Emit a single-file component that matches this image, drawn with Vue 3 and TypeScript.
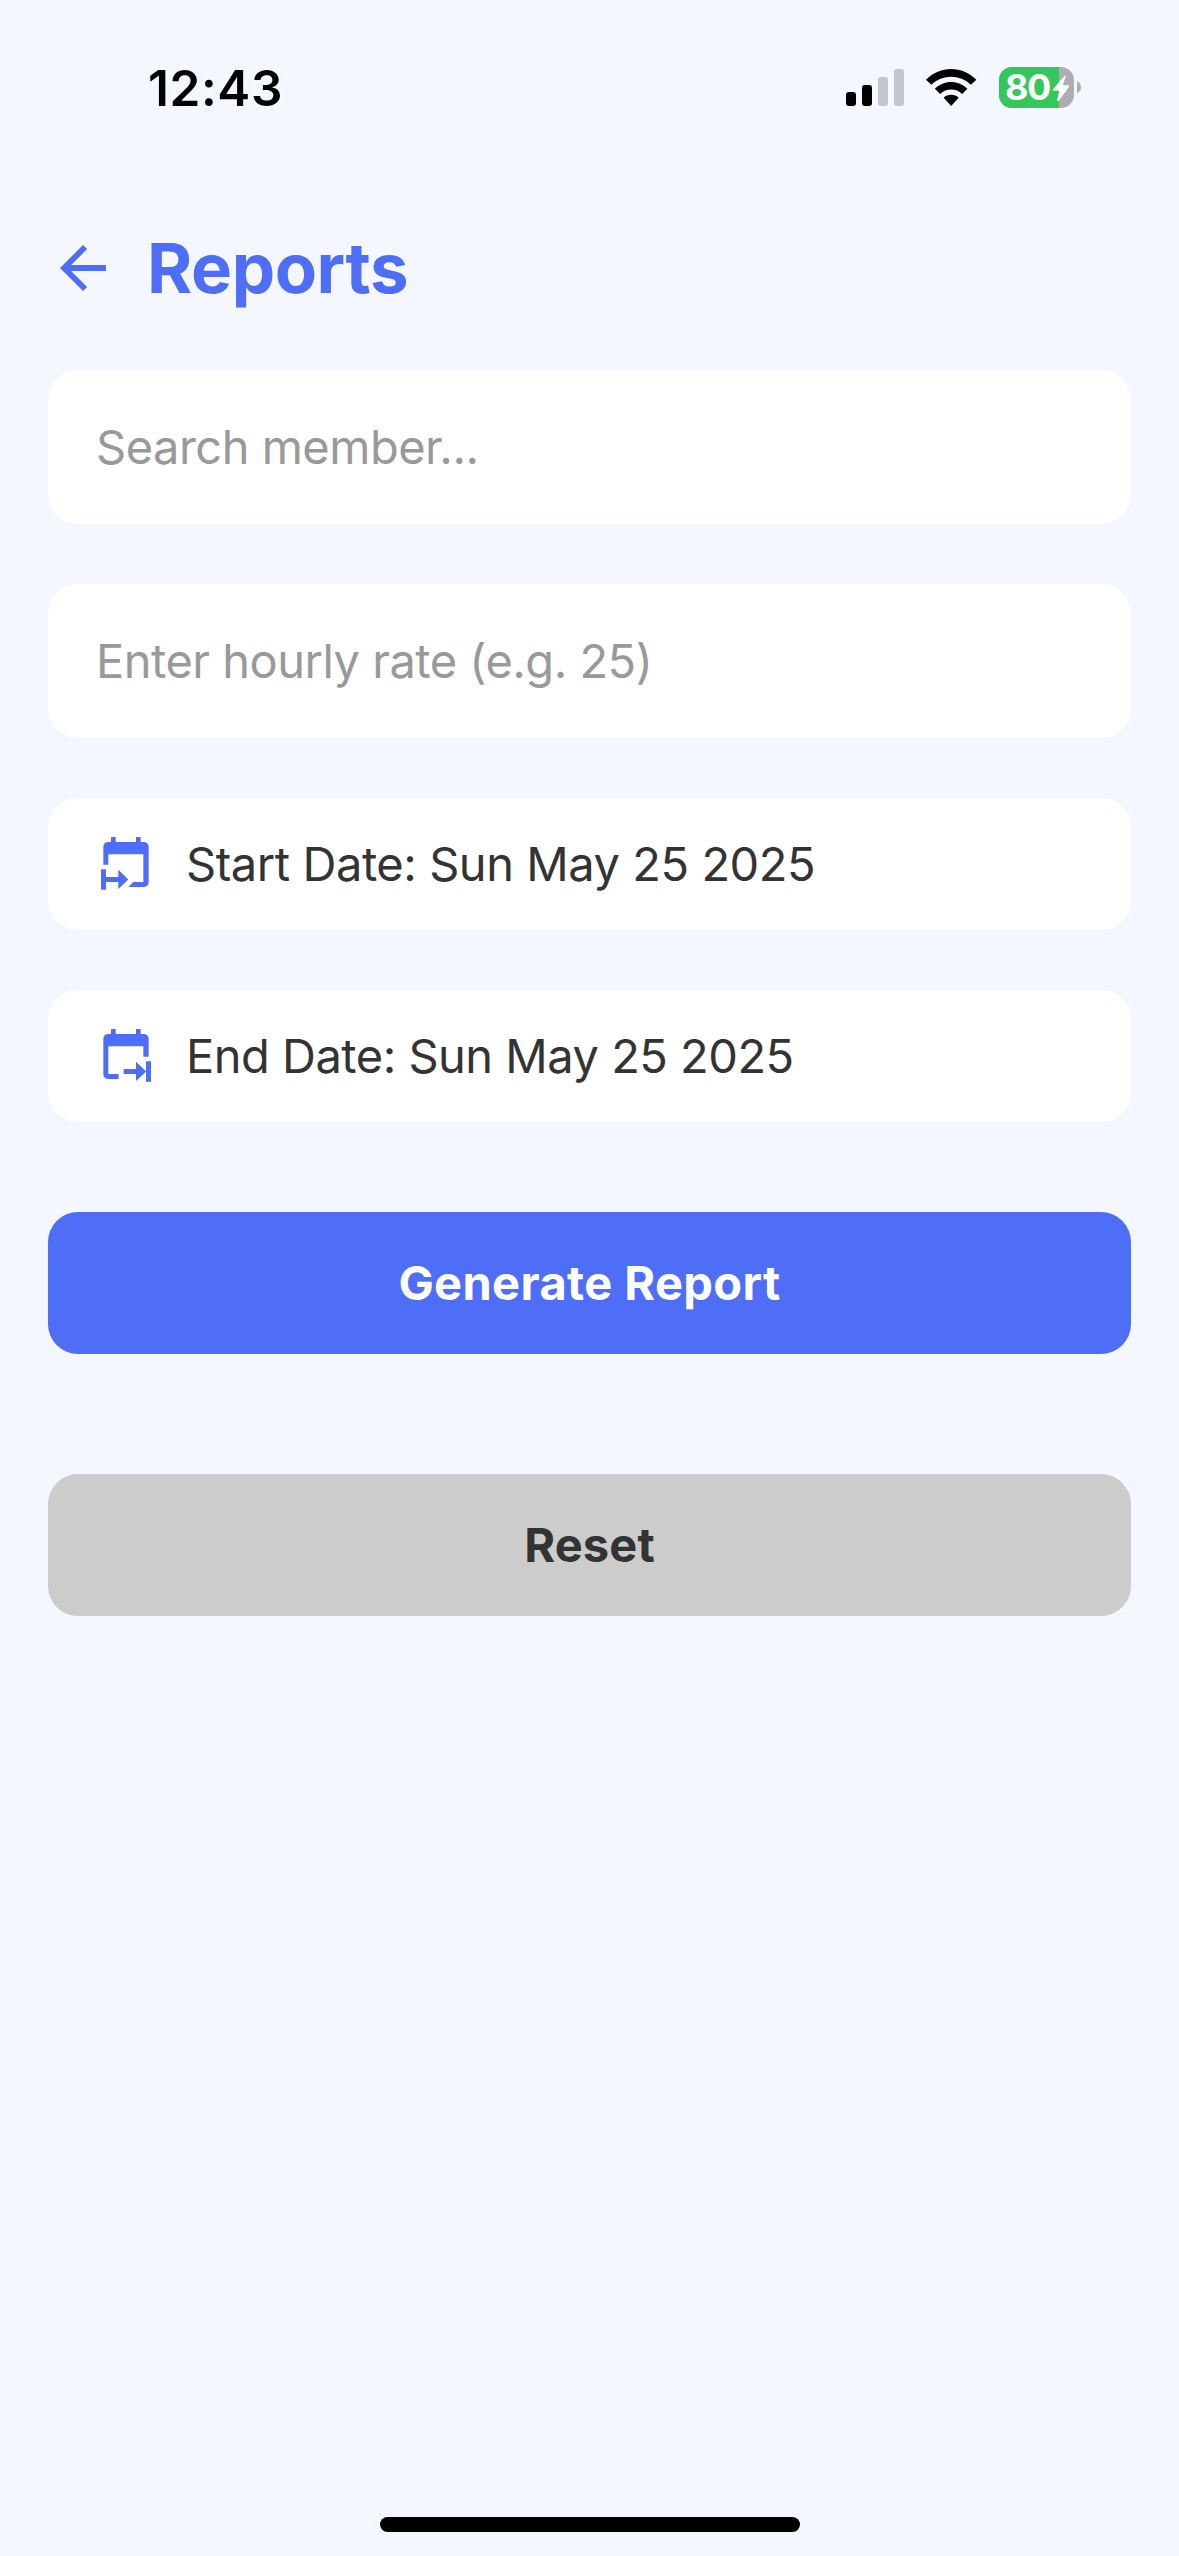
<script setup lang="ts">
interface DateField {
  id: 'start' | 'end'
  label: string
  value: string
}

const time = '12:43'
const battery = 80
const placeholders: { id: string; text: string }[] = [
  { id: 'search', text: 'Search member...' },
  { id: 'rate', text: 'Enter hourly rate (e.g. 25)' },
]
const dates: DateField[] = [
  { id: 'start', label: 'Start Date', value: 'Sun May 25 2025' },
  { id: 'end', label: 'End Date', value: 'Sun May 25 2025' },
]
</script>

<template>
  <div class="screen">
    <div class="status">
      <span class="time">{{ time }}</span>
      <div class="indicators">
        <svg class="signal" viewBox="0 0 174 111">
          <rect x="0" y="69" width="30" height="42" rx="9" />
          <rect x="48" y="48" width="30" height="63" rx="9" />
          <rect class="dim" x="96" y="24" width="30" height="87" rx="9" />
          <rect class="dim" x="144" y="0" width="30" height="111" rx="9" />
        </svg>
        <svg class="wifi" viewBox="0 0 151 111">
          <path d="M0 32C42-10.500 109-10.500 151 32L135 47.500C102 15 49 15 16 47.500Z" />
          <path d="M26.500 59C54 32 97 32 124.500 59L108.500 75C90 57.500 61 57.500 42.500 75Z" />
          <path d="M53 86C65 74.500 86 74.500 98 86L75.500 111Z" />
        </svg>
        <div class="battery">
          <svg class="battery-shape" viewBox="0 0 246 123">
            <defs>
              <clipPath id="battery-body"><rect width="225" height="123" rx="39" /></clipPath>
            </defs>
            <g clip-path="url(#battery-body)">
              <rect width="225" height="123" fill="#aeaeb2" />
              <rect width="180" height="123" fill="#34c759" />
            </g>
            <path d="M234 43C242 47 246 53 246 61C246 69 242 75 234 79Z" fill="#aeaeb2" />
            <path d="M196 27L162 67Q160 71 163 71H181L174 99Q175 104 179 101L210 60Q212 55 208 55H191L200 30Q200 25 196 27Z" fill="#fff" />
          </svg>
          <span class="level">{{ battery }}</span>
        </div>
      </div>
    </div>

    <header class="header">
      <svg class="back" viewBox="4.16 4.08 15.84 15.84">
        <path d="M20 11V13H8L13.500 18.500L12.080 19.920L4.160 12L12.080 4.080L13.500 5.500L8 11Z" />
      </svg>
      <h1 class="title">Reports</h1>
    </header>

    <main class="form">
      <div v-for="p in placeholders" :key="p.id" class="field input">
        <span class="placeholder" :class="p.id">{{ p.text }}</span>
      </div>
      <div v-for="d in dates" :key="d.id" class="field date">
        <svg v-if="d.id === 'start'" class="calendar" viewBox="48 48 198 198">
          <path d="M93 66H107V81H168V66H182V81H192Q206 82 206 96V201Q206 215 192 216H145L160 201H190V118H85V149H70V96Q70 82 84 81H93Z" />
          <path d="M63 163H78V186H115V164L145 193.500L115 222V201H78V224H63Z" />
        </svg>
        <svg v-else class="calendar" viewBox="48 54 198 198">
          <path d="M93 72H107V87H168V72H182V87H192Q206 88 206 102V155H190V124H85V207H116V222H84Q70 221 70 207V102Q70 88 84 87H93Z" />
          <path d="M131 192H168V170L198 199V169H213V230H198V200L168 228V207H131Z" />
        </svg>
        <span class="date-text" :class="d.id">{{ d.label }}: {{ d.value }}</span>
      </div>
      <button class="button primary" type="button">Generate Report</button>
      <button class="button reset" type="button">Reset</button>
    </main>

    <div class="home-indicator"></div>
  </div>
</template>

<style>
body {
  background: #f4f7ff;
}
</style>

<style scoped>
.screen {
  display: flex;
  flex-direction: column;
  width: 1179px;
  height: 2556px;
  box-sizing: border-box;
  background: #f4f7ff;
  font-family: Inter, "Liberation Sans", sans-serif;
  white-space: nowrap;
}
.status {
  display: flex;
  align-items: center;
  justify-content: space-between;
  height: 175px;
  padding: 0 98px 0 148px;
  box-sizing: border-box;
}
.time {
  padding-top: 1px;
  font-size: 49.500px;
  font-weight: 600;
  line-height: 60px;
  letter-spacing: 0.600px;
}
.indicators {
  display: flex;
  align-items: center;
}
.signal {
  width: 58px;
  height: 37px;
  margin-right: 22.300px;
}
.dim {
  fill: #c4c4cd;
}
.wifi {
  width: 50.300px;
  height: 37px;
  margin-right: 22.400px;
}
.battery {
  position: relative;
  width: 82px;
  height: 41px;
}
.battery-shape {
  display: block;
  width: 82px;
  height: 41px;
}
.level {
  position: absolute;
  left: 6px;
  top: -1px;
  color: #fff;
  font-size: 36px;
  font-weight: 700;
  line-height: 42px;
  letter-spacing: -1.500px;
}
.header {
  display: flex;
  align-items: center;
  height: 186px;
  padding-left: 60px;
  box-sizing: border-box;
}
.back {
  width: 46px;
  height: 46px;
  fill: #4f6ef7;
}
.title {
  margin: 0 0 0 41px;
  color: #4f6ef7;
  font-size: 69px;
  font-weight: 700;
  line-height: 86px;
  letter-spacing: -0.450px;
}
.form {
  display: flex;
  flex-direction: column;
  gap: 60px;
  margin-top: 9px;
  padding: 0 48px;
}
.field {
  display: flex;
  align-items: center;
  padding: 0 48px;
  border-radius: 30px;
  background: #fff;
  font-size: 47px;
  line-height: 58px;
  letter-spacing: -0.500px;
}
.input {
  height: 154px;
  color: #999;
}
.date {
  height: 132px;
  color: #333;
}
.date-text.start {
  letter-spacing: -0.450px;
}
.calendar {
  width: 66px;
  height: 66px;
  margin-right: 24px;
  fill: #4f6ef7;
}
.button {
  height: 142px;
  padding: 0;
  border: 0;
  border-radius: 30px;
  font-family: inherit;
  font-size: 47px;
  font-weight: 700;
  line-height: 58px;
  letter-spacing: 0.150px;
}
.primary {
  margin-top: 30px;
  background: #4f6ef7;
  color: #fff;
  letter-spacing: 0.400px;
}
.reset {
  margin-top: 60px;
  background: #ccc;
  color: #333;
}
.home-indicator {
  width: 420px;
  height: 15px;
  margin: auto auto 24px;
  border-radius: 8px;
  background: #000;
}
</style>
